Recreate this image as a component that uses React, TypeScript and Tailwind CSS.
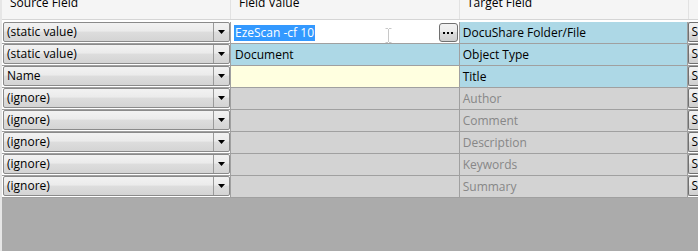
type Row = {
  source: string;
  value: "edit" | "blue" | "yellow" | "gray";
  valueText?: string;
  target: string;
  targetTone: "blue" | "gray";
};

const rows: Row[] = [
  { source: "(static value)", value: "edit", target: "DocuShare Folder/File", targetTone: "blue" },
  { source: "(static value)", value: "blue", valueText: "Document", target: "Object Type", targetTone: "blue" },
  { source: "Name", value: "yellow", target: "Title", targetTone: "blue" },
  { source: "(ignore)", value: "gray", target: "Author", targetTone: "gray" },
  { source: "(ignore)", value: "gray", target: "Comment", targetTone: "gray" },
  { source: "(ignore)", value: "gray", target: "Description", targetTone: "gray" },
  { source: "(ignore)", value: "gray", target: "Keywords", targetTone: "gray" },
  { source: "(ignore)", value: "gray", target: "Summary", targetTone: "gray" },
];

function ComboBox({ text }: { text: string }) {
  return (
    <div className="flex h-[20px] w-[227px] overflow-hidden rounded-[2px] border border-[#8a8a8a] bg-[linear-gradient(#f2f2f2_0%,#ebebeb_45%,#dddddd_50%,#d4d4d4_100%)]">
      <div className="flex flex-1 items-center pl-[3px] text-black">{text}</div>
      <div className="flex w-[16px] items-center justify-center border-l border-[#9a9a9a]">
        <svg width="7" height="4" viewBox="0 0 7 4">
          <path d="M0 0h7L3.5 4z" fill="#000" />
        </svg>
      </div>
    </div>
  );
}

function ValueCell({ row }: { row: Row }) {
  if (row.value === "edit") {
    return (
      <div className="relative flex h-full items-center bg-white pl-[3px]">
        <span className="bg-[#3399ff] px-[1px] leading-[16px] text-white">EzeScan -cf 10</span>
        <svg className="absolute left-[154px] top-[6px]" width="7" height="15" viewBox="0 0 7 15">
          <path d="M0.5 0.5h2.5M4 0.5h2.5M3.5 1v13M0.5 14.5h2.5M4 14.5h2.5" stroke="#c8c8c8" fill="none" />
        </svg>
        <div className="ml-auto mr-[1px] flex h-[19px] w-[19px] items-center justify-center gap-[2px] rounded-[3px] border border-[#707070] bg-[linear-gradient(#f2f2f2_0%,#ebebeb_45%,#dddddd_50%,#cfcfcf_100%)]">
          <span className="h-[2px] w-[2px] bg-black" />
          <span className="h-[2px] w-[2px] bg-black" />
          <span className="h-[2px] w-[2px] bg-black" />
        </div>
      </div>
    );
  }
  const bg =
    row.value === "blue" ? "bg-[#add8e6]" : row.value === "yellow" ? "bg-[#ffffe0]" : "bg-[#d3d3d3]";
  return (
    <div className={`flex h-full items-center pl-[4px] text-black ${bg}`}>{row.valueText ?? ""}</div>
  );
}

export default function App() {
  return (
    <div
      className="flex h-[251px] w-[698px] flex-col overflow-hidden border-l-2 border-[#e6e6e6] bg-[#ababab] text-[12px]"
      style={{ fontFamily: '"Open Sans", "Noto Sans", sans-serif' }}
    >
      <div className="flex h-[22px] shrink-0 border-b-2 border-white bg-[#f5f5f5]">
        <div className="flex h-[20px] w-full border-b border-[#d5d5d5]">
          <div className="w-[229px] border-r border-[#e2e2e2] pl-[8px]">
            <div className="mt-[-5px] leading-[16px] text-black">Source Field</div>
          </div>
          <div className="w-[229px] border-r border-[#e2e2e2] pl-[8px]">
            <div className="mt-[-5px] leading-[16px] text-black">Field Value</div>
          </div>
          <div className="w-[229px] border-r border-[#e2e2e2] pl-[7px]">
            <div className="mt-[-5px] leading-[16px] text-black">Target Field</div>
          </div>
          <div className="flex-1" />
        </div>
      </div>

      {rows.map((row, i) => (
        <div key={i} className="flex h-[22px] shrink-0 border-b border-[#a0a0a0]">
          <div className="flex w-[229px] items-start border-r border-[#a0a0a0] bg-white pl-[1px]">
            <ComboBox text={row.source} />
          </div>
          <div className="w-[229px] border-r border-[#a0a0a0]">
            <ValueCell row={row} />
          </div>
          <div
            className={`flex w-[229px] items-center border-r border-[#a0a0a0] pl-[3px] ${
              row.targetTone === "blue" ? "bg-[#add8e6] text-black" : "bg-[#d3d3d3] text-[#878787]"
            }`}
          >
            {row.target}
          </div>
          <div className="flex-1 bg-white">
            <div className="flex h-[20px] items-center rounded-l-[2px] border border-r-0 border-[#707070] bg-[linear-gradient(#f2f2f2_0%,#ebebeb_45%,#dddddd_50%,#cfcfcf_100%)] pl-[2px] text-black">
              S
            </div>
          </div>
        </div>
      ))}
    </div>
  );
}
